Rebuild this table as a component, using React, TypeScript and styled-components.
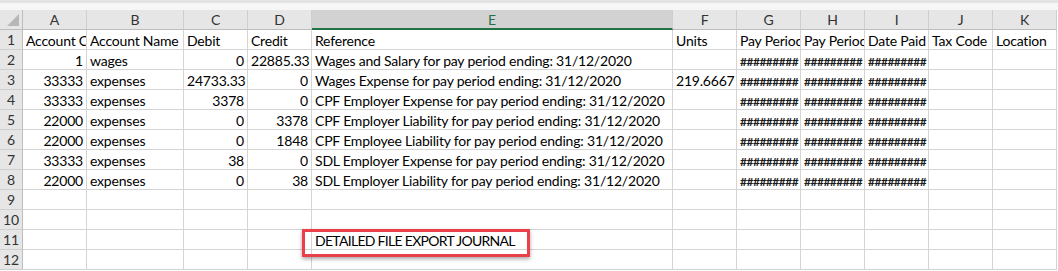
import React from "react";
import styled, { createGlobalStyle } from "styled-components";

const GlobalStyle = createGlobalStyle`
  body {
    margin: 0;
    background: #ffffff;
    font-family: "Lato", "Liberation Sans", sans-serif;
  }
`;

const COLS = ["A", "B", "C", "D", "E", "F", "G", "H", "I", "J", "K"];
const WIDTHS = [64, 97, 64, 64, 361, 64, 64, 64, 64, 64, 64];
const HASH = "#########";
const TITLE = "DETAILED FILE EXPORT JOURNAL";

type Row = (string | number | null)[];

const ROWS: Row[] = [
  ["Account Code", "Account Name", "Debit", "Credit", "Reference", "Units", "Pay Period Start", "Pay Period End", "Date Paid", "Tax Code", "Location"],
  [1, "wages", 0, 22885.33, "Wages and Salary for pay period ending: 31/12/2020", null, HASH, HASH, HASH, null, null],
  [33333, "expenses", 24733.33, 0, "Wages Expense for pay period ending: 31/12/2020", 219.6667, HASH, HASH, HASH, null, null],
  [33333, "expenses", 3378, 0, "CPF Employer Expense for pay period ending: 31/12/2020", null, HASH, HASH, HASH, null, null],
  [22000, "expenses", 0, 3378, "CPF Employer Liability for pay period ending: 31/12/2020", null, HASH, HASH, HASH, null, null],
  [22000, "expenses", 0, 1848, "CPF Employee Liability for pay period ending: 31/12/2020", null, HASH, HASH, HASH, null, null],
  [33333, "expenses", 38, 0, "SDL Employer Expense for pay period ending: 31/12/2020", null, HASH, HASH, HASH, null, null],
  [22000, "expenses", 0, 38, "SDL Employer Liability for pay period ending: 31/12/2020", null, HASH, HASH, HASH, null, null],
  [],
  [],
  [null, null, null, null, TITLE],
  [],
];

const Page = styled.div`
  position: relative;
  width: 1058px;
  height: 271px;
  overflow: hidden;
  background: #ffffff;
`;

const TopBand = styled.div`
  height: 10px;
  background: #f6f6f6;
  border-top: 3px solid #e3e3e3;
  box-sizing: border-box;
`;

const Sheet = styled.div`
  display: grid;
  grid-template-columns: 23px ${WIDTHS.map((w) => `${w}px`).join(" ")};
  grid-auto-rows: 20px;
  width: 1058px;
  font-size: 14px;
  letter-spacing: -0.2px;
`;

const Corner = styled.div`
  position: relative;
  background: #e6e6e6;
  border-right: 1px solid #bdbdbd;
  border-bottom: 1px solid #bdbdbd;
  box-sizing: border-box;

  &::after {
    content: "";
    position: absolute;
    right: 3px;
    bottom: 3px;
    width: 0;
    height: 0;
    border-left: 12px solid transparent;
    border-bottom: 12px solid #b7b7b7;
  }
`;

const ColHead = styled.div<{ $active?: boolean }>`
  box-sizing: border-box;
  background: ${(p) => (p.$active ? "#d2d2d2" : "#e6e6e6")};
  border-right: 1px solid #cfcfcf;
  border-bottom: ${(p) => (p.$active ? "2px solid #217346" : "1px solid #bdbdbd")};
  color: ${(p) => (p.$active ? "#217346" : "#333333")};
  line-height: 20px;
  text-align: center;
`;

const RowHead = styled.div`
  box-sizing: border-box;
  background: #e6e6e6;
  border-right: 1px solid #bdbdbd;
  border-bottom: 1px solid #cfcfcf;
  color: #333333;
  line-height: 20px;
  text-align: center;
`;

const Cell = styled.div<{ $align: "left" | "right"; $clip: boolean }>`
  box-sizing: border-box;
  border-right: 1px solid #d4d4d4;
  border-bottom: 1px solid #d4d4d4;
  color: #000000;
  line-height: 20px;
  padding: 1px 3px 0 3px;
  white-space: nowrap;
  text-align: ${(p) => p.$align};
  overflow: ${(p) => (p.$clip ? "hidden" : "visible")};
  text-overflow: clip;
`;

const Hashes = styled.span`
  font-size: 12px;
  font-weight: bold;
  letter-spacing: -0.5px;
  color: #1a1a1a;
`;

const Caps = styled.span`
  letter-spacing: -0.7px;
`;

const Callout = styled.div`
  position: absolute;
  left: 302px;
  top: 229px;
  width: 228px;
  height: 28px;
  box-sizing: border-box;
  border: 3px solid #ea4148;
  box-shadow: 0 2px 4px rgba(0, 0, 0, 0.35);
  pointer-events: none;
`;

function renderValue(v: string | number | null) {
  if (v === null || v === undefined) return "";
  if (v === HASH) return <Hashes>{HASH}</Hashes>;
  if (v === TITLE) return <Caps>{TITLE}</Caps>;
  return String(v);
}

export default function App() {
  return (
    <Page>
      <GlobalStyle />
      <TopBand />
      <Sheet>
        <Corner />
        {COLS.map((c) => (
          <ColHead key={c} $active={c === "E"}>
            {c}
          </ColHead>
        ))}
        {ROWS.map((row, r) => (
          <React.Fragment key={r}>
            <RowHead>{r + 1}</RowHead>
            {COLS.map((c, i) => {
              const v = row[i] ?? null;
              const nextFilled = i < COLS.length - 1 && row[i + 1] != null;
              return (
                <Cell key={c} $align={typeof v === "number" ? "right" : "left"} $clip={nextFilled || v === HASH}>
                  {renderValue(v)}
                </Cell>
              );
            })}
          </React.Fragment>
        ))}
      </Sheet>
      <Callout />
    </Page>
  );
}
